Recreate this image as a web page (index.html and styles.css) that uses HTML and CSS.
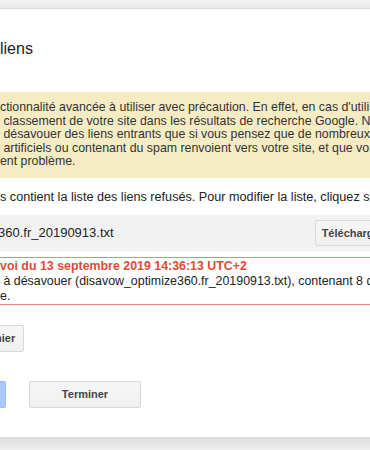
FILE: index.html
```html
<!DOCTYPE html>
<html lang="fr">
<head>
    <meta charset="UTF-8">
    <meta name="viewport" content="width=device-width, initial-scale=1.0">
    <title>Désavouer des liens</title>
    <link rel="stylesheet" href="styles.css">
</head>

<body>
<div class="page-top"></div>

<main class="dialog">
    <h1 class="dialog-title">liens</h1>

    <div class="warning">
        <div class="line">ctionnalité avancée à utiliser avec précaution. En effet, en cas d'utilisation</div>
        <div class="line">&nbsp;classement de votre site dans les résultats de recherche Google. Nous</div>
        <div class="line">&nbsp;désavouer des liens entrants que si vous pensez que de nombreux liens</div>
        <div class="line">&nbsp;artificiels ou contenant du spam renvoient vers votre site, et que vous</div>
        <div class="line">ent problème.</div>
    </div>

    <p class="intro">s contient la liste des liens refusés. Pour modifier la liste, cliquez sur</p>

    <div class="file-row">
        <span class="file-name">360.fr_20190913.txt</span>
        <button class="btn btn-download">Télécharger</button>
    </div>

    <div class="error-box">
        <div class="error-title">voi du 13 septembre 2019 14:36:13 UTC+2</div>
        <div class="line">&nbsp;à désavouer (disavow_optimize360.fr_20190913.txt), contenant 8 domaines</div>
        <div class="line">e.</div>
    </div>

    <div class="replace">
        <button class="btn btn-replace">nier</button>
    </div>

    <div class="actions">
        <button class="btn btn-primary" disabled>Envoyer</button>
        <button class="btn btn-done">Terminer</button>
    </div>
</main>

<div class="page-bottom"></div>
</body>
</html>
```

FILE: styles.css
```css
html, body {
    margin: 0;
    padding: 0;
    overflow: hidden;
}

body {
    font-family: "Liberation Sans", Arial, sans-serif;
    font-size: 13px;
    color: #222;
    background: #fff;
    width: 370px;
    height: 450px;
    display: flex;
    flex-direction: column;
}

.page-top {
    height: 8px;
    background: linear-gradient(#f4f4f4, #e9e9e9);
    border-bottom: 1px solid #d9d9d9;
}

.dialog {
    width: 400px;
    padding: 29px 0 29px 0;
    background: #fff;
}

.line {
    white-space: nowrap;
}

.dialog-title {
    margin: 0 0 32px 0;
    font-size: 16px;
    font-weight: normal;
    line-height: 22px;
    color: #222;
}

.warning {
    background: #f6ecc4;
    padding: 9px 0 9px 0;
    font-size: 12.35px;
    line-height: 13.6px;
    color: #333;
}

.intro {
    margin: 12px 0 0 0;
    font-size: 12.65px;
    line-height: 14px;
    white-space: nowrap;
}

.file-row {
    display: flex;
    align-items: center;
    margin-top: 11px;
    height: 36px;
    background: #f2f2f2;
    padding-right: 9px;
}

.file-name {
    margin-left: -2px;
    font-size: 13px;
}

.btn {
    font-family: "Liberation Sans", Arial, sans-serif;
    font-size: 11px;
    font-weight: bold;
    color: #444;
    height: 27px;
    padding: 0 8px;
    background: linear-gradient(#f6f6f6, #f0f0f0);
    border: 1px solid #d9d9d9;
    border-radius: 2px;
    white-space: nowrap;
}

.btn-download {
    margin-left: auto;
    height: 26px;
    padding: 0 6px;
}

.error-box {
    margin-top: 6px;
    border-top: 1px solid #e3887f;
    border-bottom: 1px solid #e3887f;
    font-size: 12.4px;
    line-height: 15px;
}

.error-title {
    color: #dd4b39;
    font-weight: bold;
    line-height: 16px;
    white-space: nowrap;
}

.replace {
    margin-top: 20px;
}

.btn-replace {
    padding: 0 8px 0 20px;
    margin-left: -26px;
}

.actions {
    display: flex;
    margin-top: 29px;
}

.btn-primary {
    width: 80px;
    margin-left: -74px;
    background: #a9c7f7;
    border: 1px dotted #8fb2ee;
    color: transparent;
}

.btn-done {
    width: 112px;
    margin-left: 23px;
}

.page-bottom {
    flex: 1;
    background: linear-gradient(#dcdcdc, #efefef);
}
```
